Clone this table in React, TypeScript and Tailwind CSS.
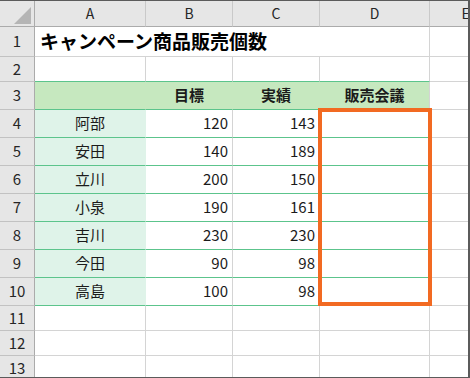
import React from "react";

const FONT = { fontFamily: '"Noto Sans CJK JP", "Noto Sans", sans-serif' };

type Cell = {
  text?: string;
  cls?: string;
};

const colW = ["w-[35px]", "w-[111px]", "w-[87px]", "w-[87px]", "w-[110px]", "w-[72px]"];

const GRID = "border-[#d4d4d4]";
const GREEN_LINE = "border-b-[#5cc48c]";

type Row = {
  num: string;
  h: string;
  cells: Cell[];
};

const people: [string, number, number][] = [
  ["阿部", 120, 143],
  ["安田", 140, 189],
  ["立川", 200, 150],
  ["小泉", 190, 161],
  ["吉川", 230, 230],
  ["今田", 90, 98],
  ["高島", 100, 98],
];

const plain = `border-r border-b ${GRID}`;

const rows: Row[] = [
  {
    num: "1",
    h: "h-[30px]",
    cells: [
      {
        text: "キャンペーン商品販売個数",
        cls: `border-b ${GRID} border-r-0 text-[19px] font-bold text-black pl-[5px] whitespace-nowrap overflow-visible`,
      },
      { cls: `border-b ${GRID} border-r-0` },
      { cls: `border-b ${GRID} border-r-0` },
      { cls: plain },
      { cls: plain },
    ],
  },
  {
    num: "2",
    h: "h-[25px]",
    cells: [
      { cls: `border-r border-b ${GRID} ${GREEN_LINE}` },
      { cls: `border-r border-b ${GRID} ${GREEN_LINE}` },
      { cls: `border-r border-b ${GRID} ${GREEN_LINE}` },
      { cls: `border-r border-b ${GRID} ${GREEN_LINE}` },
      { cls: plain },
    ],
  },
  {
    num: "3",
    h: "h-[28px]",
    cells: [
      { cls: `bg-[#c6e8bf] border-r border-b border-r-[#c6e8bf] ${GREEN_LINE}` },
      { text: "目標", cls: `bg-[#c6e8bf] border-r border-b border-r-[#c6e8bf] ${GREEN_LINE} justify-center font-bold` },
      { text: "実績", cls: `bg-[#c6e8bf] border-r border-b border-r-[#c6e8bf] ${GREEN_LINE} justify-center font-bold` },
      { text: "販売会議", cls: `bg-[#c6e8bf] border-r border-b border-r-[#d4d4d4] ${GREEN_LINE} justify-center font-bold` },
      { cls: plain },
    ],
  },
  ...people.map(([name, goal, result], i) => ({
    num: String(i + 4),
    h: "h-[28px]",
    cells: [
      { text: name, cls: `bg-[#dff3e9] border-r border-b border-r-[#dff3e9] ${GREEN_LINE} justify-center` },
      { text: String(goal), cls: `border-r border-b border-r-[#d4d4d4] ${GREEN_LINE} justify-end pr-[4px]` },
      { text: String(result), cls: `border-r border-b border-r-[#d4d4d4] ${GREEN_LINE} justify-end pr-[4px]` },
      { cls: `border-r border-b border-r-[#d4d4d4] ${GREEN_LINE}` },
      { cls: plain },
    ],
  })),
  ...["11", "12", "13"].map((n) => ({
    num: n,
    h: "h-[25px]",
    cells: [{ cls: plain }, { cls: plain }, { cls: plain }, { cls: plain }, { cls: plain }],
  })),
];

function SelectAll() {
  return (
    <svg width="34" height="25" viewBox="0 0 34 25" className="block">
      <polygon points="31,6 31,23 14,23" fill="#b5b5b5" />
    </svg>
  );
}

export default function App() {
  return (
    <div
      className="relative w-[470px] h-[378px] bg-white border-t border-r-2 border-b border-[#5b5b5b] overflow-hidden text-[15px] text-[#1b1b1b]"
      style={FONT}
    >
      <div className="w-[468px] h-[376px] overflow-hidden">
        {/* column headers */}
        <div className="flex h-[26px] bg-[#e6e6e6]">
          <div className={`${colW[0]} shrink-0 border-r border-b border-[#ababab]`}>
            <SelectAll />
          </div>
          {["A", "B", "C", "D", "E"].map((c, i) => (
            <div
              key={c}
              className={`${colW[i + 1]} shrink-0 flex items-center justify-center border-b border-b-[#ababab] border-r border-r-[#c9c9c9] text-[14px] text-[#262626]`}
            >
              {c}
            </div>
          ))}
        </div>

        {rows.map((r) => (
          <div key={r.num} className={`flex ${r.h}`}>
            <div
              className={`${colW[0]} shrink-0 flex items-center justify-center bg-[#e6e6e6] border-r border-r-[#ababab] border-b border-b-[#c2c2c2] text-[15px] text-[#262626]`}
            >
              {r.num}
            </div>
            {r.cells.map((c, i) => (
              <div key={i} className={`${colW[i + 1]} shrink-0 flex items-center ${c.cls ?? ""}`}>
                {c.text}
              </div>
            ))}
          </div>
        ))}
      </div>

      {/* highlighted range D4:D10 */}
      <div className="absolute left-[318px] top-[107px] w-[114px] h-[198px] border-[4px] border-[#f26a22]" />
    </div>
  );
}
